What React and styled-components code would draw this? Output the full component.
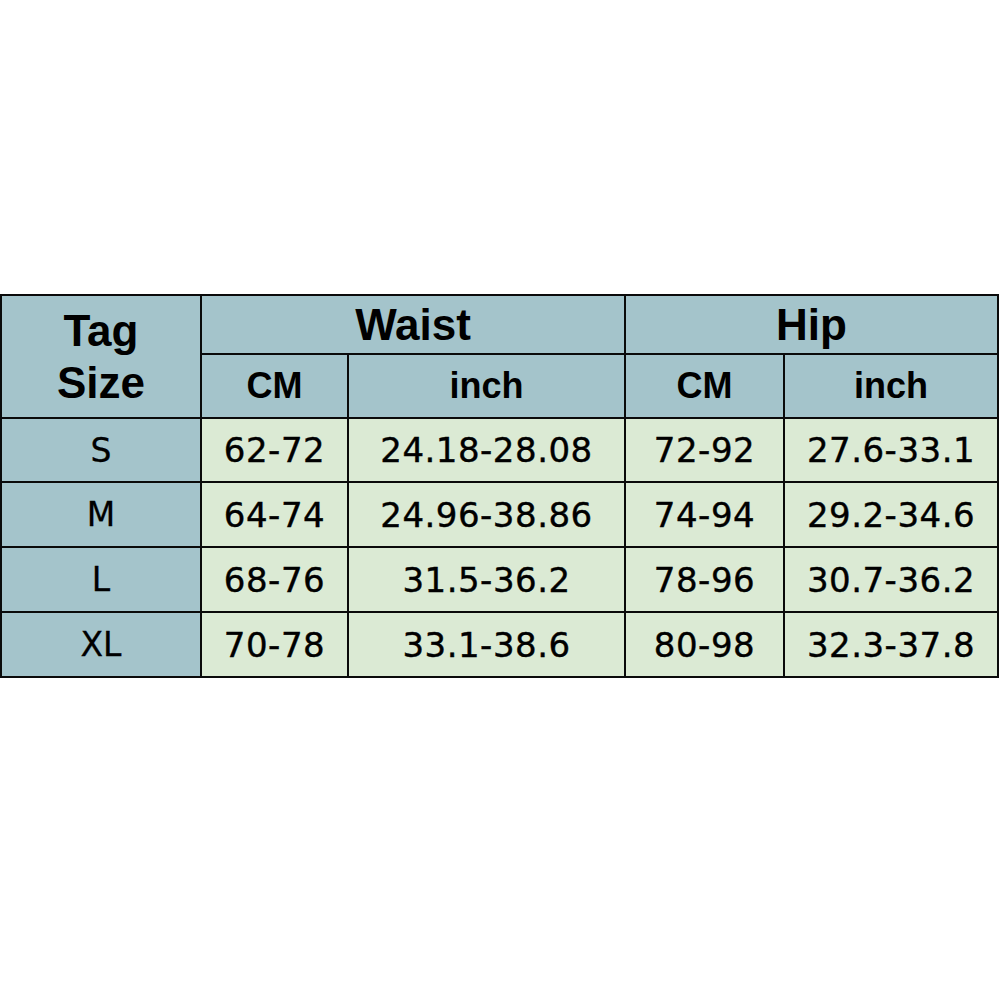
import React from "react";
import styled, { createGlobalStyle } from "styled-components";

// ===== Global =====
const GlobalStyle = createGlobalStyle`
  html, body {
    margin: 0;
    padding: 0;
    background: #fff;
  }
`;

// ===== Styles =====
const Page = styled.div`
  width: 1002px;
  height: 1002px;
  padding-top: 294px;
  box-sizing: border-box;
  background: #fff;
`;

const Chart = styled.div`
  width: 999px;
  box-sizing: border-box;
  display: grid;
  grid-template-columns: 198px 145px 275px 157px 212px;
  grid-template-rows: 57px 62px 62px 63px 63px 63px;
  gap: 2px;
  padding: 2px;
  background: #0a0a0a;
`;

const Cell = styled.div`
  display: flex;
  align-items: center;
  justify-content: center;
  text-align: center;
  color: #000;
  background: ${(p) => (p.head ? "#a4c4cb" : "#dbead4")};
  grid-column: ${(p) => (p.colSpan ? `span ${p.colSpan}` : "auto")};
  grid-row: ${(p) => (p.rowSpan ? `span ${p.rowSpan}` : "auto")};
`;

const Title = styled(Cell)`
  font-family: "Liberation Sans", Arial, sans-serif;
  font-weight: 700;
  font-size: 44px;
  line-height: 52px;
`;

const Unit = styled(Cell)`
  font-family: "Liberation Sans", Arial, sans-serif;
  font-weight: 700;
  font-size: 36px;
`;

const SizeTag = styled(Cell)`
  font-family: "DejaVu Sans", Verdana, sans-serif;
  font-size: 33px;
  -webkit-text-stroke: 0.3px #000;
`;

const Value = styled(Cell)`
  font-family: "DejaVu Sans", Verdana, sans-serif;
  font-size: 34px;
  letter-spacing: 0.5px;
  -webkit-text-stroke: 0.4px #000;
`;

const rows = [
  ["S", "62-72", "24.18-28.08", "72-92", "27.6-33.1"],
  ["M", "64-74", "24.96-38.86", "74-94", "29.2-34.6"],
  ["L", "68-76", "31.5-36.2", "78-96", "30.7-36.2"],
  ["XL", "70-78", "33.1-38.6", "80-98", "32.3-37.8"],
];

// ===== Component =====
const App = () => (
  <Page>
    <GlobalStyle />
    <Chart>
      <Title head rowSpan={2}>
        Tag
        <br />
        Size
      </Title>
      <Title head colSpan={2}>Waist</Title>
      <Title head colSpan={2}>Hip</Title>
      <Unit head>CM</Unit>
      <Unit head>inch</Unit>
      <Unit head>CM</Unit>
      <Unit head>inch</Unit>

      {rows.map(([size, ...vals]) => (
        <React.Fragment key={size}>
          <SizeTag head>{size}</SizeTag>
          {vals.map((v, i) => (
            <Value key={i}>{v}</Value>
          ))}
        </React.Fragment>
      ))}
    </Chart>
  </Page>
);

export default App;
